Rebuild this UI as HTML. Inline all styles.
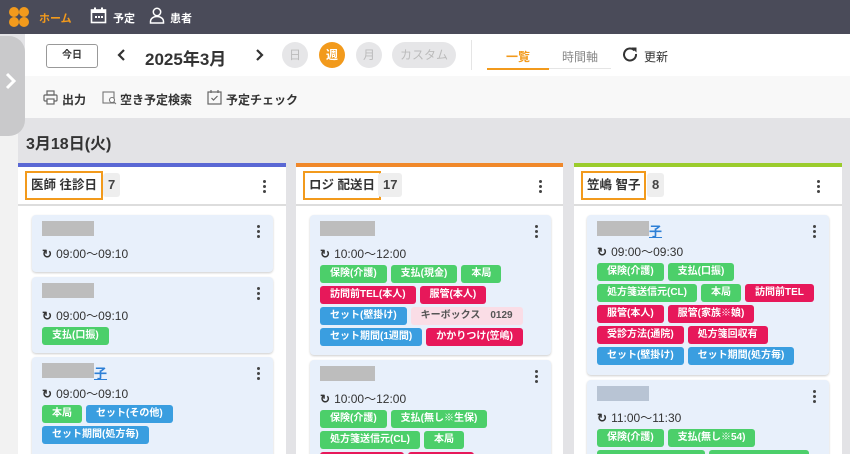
<!DOCTYPE html><html><head><meta charset="utf-8"><style>
*{box-sizing:border-box;margin:0;padding:0}
html,body{width:850px;height:454px;overflow:hidden}
body{background:#e3e3e6;font-family:"Liberation Sans","Noto Sans CJK JP",sans-serif;position:relative;color:#333}
.a{position:absolute}
.top{left:0;top:0;width:850px;height:34px;background:#4a4b59;color:#fff;font-size:11px;font-weight:bold}
.tb{left:25px;top:34px;width:825px;height:42px;background:#fff}
.tb2{left:25px;top:76px;width:825px;height:42px;background:#f8f8f8;font-size:12px;font-weight:bold;color:#333}
.circ{width:26px;height:26px;border-radius:13px;background:#e6e6e8;color:#bbb;font-size:12px;text-align:center;line-height:26px}
.col{background:#fff;border-top:4px solid}
.hdr{height:39px;border-bottom:2px solid #ddd;position:relative}
.hl{position:absolute;left:7px;top:4px;height:29px;border:2px solid #f29a1c;font-size:12.5px;font-weight:bold;line-height:25px;padding:0 4px;color:#333;background:#fff}
.cnt{position:absolute;top:6px;height:24px;background:#eee;border-radius:3px;font-size:13px;font-weight:bold;line-height:24px;padding:0 5px;color:#444}
.kb{position:absolute;width:3px}
.kb i{display:block;width:3px;height:3px;border-radius:2px;background:#444;margin-bottom:2px}
.card{position:absolute;background:#e8f0fb;border-radius:4px;box-shadow:0 1px 2px rgba(0,0,0,.2);padding:6px 10px;overflow:hidden}
.blur{height:15px;background:#bdbdbd;display:inline-block;vertical-align:top}
.nm{height:20px;font-size:13px;color:#2d7fd6;font-weight:bold;text-decoration:underline}
.tm{font-size:12px;margin-top:6px;height:19px;color:#333}
.tm b{font-weight:bold;font-size:12px;margin-right:4px}
.tags{display:flex;flex-wrap:wrap;gap:3px 4px;margin-top:1px}
.t{height:18px;border-radius:3px;font-size:10px;font-weight:bold;color:#fff;line-height:18px;padding:0 10px;white-space:nowrap}
.g{background:#4ccf6a}.r{background:#e7185a}.bl{background:#3a9ee0}.p{background:#fadde6;color:#555}
</style></head><body>
<div class="a top">
 <svg class="a" style="left:8px;top:6px" width="22" height="22"><g fill="#f29a1c"><circle cx="6" cy="6" r="5"/><circle cx="16" cy="6" r="5"/><circle cx="6" cy="16" r="5"/><circle cx="16" cy="16" r="5"/></g></svg>
 <span class="a" style="left:39px;top:10px;color:#f29a1c">ホーム</span>
 <svg class="a" style="left:90px;top:7px" width="17" height="17"><rect x="1.5" y="3" width="14" height="12.5" fill="none" stroke="#fff" stroke-width="1.6"/><rect x="1.5" y="3" width="14" height="3" fill="#fff"/><rect x="4" y="0.5" width="2" height="3" fill="#fff"/><rect x="11" y="0.5" width="2" height="3" fill="#fff"/><g fill="#fff"><rect x="5" y="9" width="2" height="2"/><rect x="8" y="9" width="2" height="2"/><rect x="11" y="9" width="2" height="2"/></g></svg>
 <span class="a" style="left:113px;top:10px">予定</span>
 <svg class="a" style="left:149px;top:7px" width="16" height="17"><circle cx="8" cy="5" r="3.7" fill="none" stroke="#fff" stroke-width="1.5"/><path d="M1.5 16v-1.5c0-3 3-5 6.5-5s6.5 2 6.5 5V16z" fill="none" stroke="#fff" stroke-width="1.5"/></svg>
 <span class="a" style="left:170px;top:10px">患者</span>
</div>
<div class="a" style="left:0;top:118px;width:18px;height:336px;background:#f2f2f2"></div>
<div class="a tb">
 <div class="a" style="left:21px;top:10px;width:52px;height:24px;border:1px solid #999;border-radius:3px;font-size:10px;text-align:center;line-height:22px;font-weight:bold">今日</div>
 <svg class="a" style="left:92px;top:15px" width="10" height="12"><path d="M7 1L2 6l5 5" fill="none" stroke="#333" stroke-width="2.2"/></svg>
 <div class="a" style="left:120px;top:11px;font-size:17px;font-weight:bold;color:#333">2025年3月</div>
 <svg class="a" style="left:229px;top:15px" width="10" height="12"><path d="M3 1l5 5-5 5" fill="none" stroke="#333" stroke-width="2.2"/></svg>
 <div class="a circ" style="left:257px;top:8px">日</div>
 <div class="a circ" style="left:294px;top:8px;background:#f29a1c;color:#fff;font-weight:bold">週</div>
 <div class="a circ" style="left:331px;top:8px">月</div>
 <div class="a circ" style="left:367px;top:8px;width:64px">カスタム</div>
 <div class="a" style="left:446px;top:6px;width:1px;height:30px;background:#e5e5e5"></div>
 <div class="a" style="left:462px;top:14px;width:62px;text-align:center;font-size:12px;color:#f29a1c;font-weight:bold">一覧</div>
 <div class="a" style="left:524px;top:14px;width:62px;text-align:center;font-size:12px;color:#888">時間軸</div>
 <div class="a" style="left:462px;top:34px;width:62px;height:2px;background:#f29a1c"></div>
 <div class="a" style="left:524px;top:34px;width:62px;height:1px;background:#e5e5e5"></div>
 <svg class="a" style="left:597px;top:12px" width="16" height="16"><path d="M12.5 4.5A6 6 0 1 0 14 8" fill="none" stroke="#333" stroke-width="2"/><path d="M9.5 1.5h5v5z" fill="#333"/></svg>
 <div class="a" style="left:619px;top:14px;font-size:12px">更新</div>
</div>
<div class="a tb2">
 <svg class="a" style="left:18px;top:14px" width="15" height="15"><rect x="4" y="1" width="7" height="4" fill="none" stroke="#666" stroke-width="1.2"/><rect x="1" y="5" width="13" height="6" rx="1" fill="none" stroke="#666" stroke-width="1.2"/><rect x="4" y="9" width="7" height="5" fill="#fff" stroke="#666" stroke-width="1.2"/></svg>
 <span class="a" style="left:37px;top:15px">出力</span>
 <svg class="a" style="left:77px;top:14px" width="15" height="15"><rect x="1" y="2" width="11" height="11" fill="none" stroke="#777" stroke-width="1.1"/><circle cx="10" cy="10" r="2.5" fill="#fff" stroke="#777" stroke-width="1.1"/><path d="M12 12l2 2" stroke="#777"/></svg>
 <span class="a" style="left:95px;top:15px">空き予定検索</span>
 <svg class="a" style="left:182px;top:13px" width="15" height="16"><rect x="1" y="3" width="13" height="12" fill="none" stroke="#666" stroke-width="1.2"/><path d="M4 1v3M11 1v3M4.5 9l2 2 4-4" fill="none" stroke="#666" stroke-width="1.2"/></svg>
 <span class="a" style="left:201px;top:15px">予定チェック</span>
</div>
<div class="a" style="left:0;top:36px;width:25px;height:100px;background:#c9c9cb;border-radius:0 16px 16px 0"></div>
<svg class="a" style="left:5px;top:72px" width="12" height="18"><path d="M2 2l7 7-7 7" fill="none" stroke="#fff" stroke-width="3"/></svg>
<div class="a" style="left:26px;top:130px;font-size:16px;font-weight:bold;color:#333">3月18日(火)</div>

<div class="a col" style="left:18px;top:163px;width:268px;height:300px;border-color:#5a68d4">
 <div class="hdr"><div class="hl">医師 往診日</div><div class="cnt" style="left:85px">7</div><div class="kb" style="left:245px;top:13px"><i></i><i></i><i></i></div></div>
</div>
<div class="card" style="left:32px;top:215px;width:241px;height:57px"><span class="blur" style="width:52px"></span><div class="tm"><b>↻</b>09:00〜09:10</div><div class="kb" style="left:225px;top:10px;position:absolute"><i></i><i></i><i></i></div></div>
<div class="card" style="left:32px;top:277px;width:241px;height:76px"><span class="blur" style="width:52px"></span><div class="tm"><b>↻</b>09:00〜09:10</div><div class="tags"><span class="t g">支払(口振)</span></div><div class="kb" style="left:225px;top:10px;position:absolute"><i></i><i></i><i></i></div></div>
<div class="card" style="left:32px;top:357px;width:241px;height:110px"><span class="blur" style="width:52px"></span><span class="nm">子</span><div class="tm" style="margin-top:2px"><b>↻</b>09:00〜09:10</div><div class="tags"><span class="t g">本局</span><span class="t bl">セット(その他)</span><span class="t bl">セット期間(処方毎)</span></div><div class="kb" style="left:225px;top:10px;position:absolute"><i></i><i></i><i></i></div></div>

<div class="a col" style="left:296px;top:163px;width:267px;height:300px;border-color:#f0882a">
 <div class="hdr"><div class="hl">ロジ 配送日</div><div class="cnt" style="left:82px">17</div><div class="kb" style="left:243px;top:13px"><i></i><i></i><i></i></div></div>
</div>
<div class="card" style="left:310px;top:215px;width:241px;height:140px"><span class="blur" style="width:55px"></span><div class="tm"><b>↻</b>10:00〜12:00</div><div class="tags"><span class="t g">保険(介護)</span><span class="t g">支払(現金)</span><span class="t g">本局</span><span class="t r">訪問前TEL(本人)</span><span class="t r">服管(本人)</span><span class="t bl">セット(壁掛け)</span><span class="t p">キーボックス　0129</span><span class="t bl">セット期間(1週間)</span><span class="t r">かかりつけ(笠嶋)</span></div><div class="kb" style="left:225px;top:10px;position:absolute"><i></i><i></i><i></i></div></div>
<div class="card" style="left:310px;top:360px;width:241px;height:110px"><span class="blur" style="width:55px"></span><div class="tm"><b>↻</b>10:00〜12:00</div><div class="tags"><span class="t g">保険(介護)</span><span class="t g">支払(無し※生保)</span><span class="t g">処方箋送信元(CL)</span><span class="t g">本局</span><span class="t r" style="width:84px"></span><span class="t r" style="width:66px"></span></div><div class="kb" style="left:225px;top:10px;position:absolute"><i></i><i></i><i></i></div></div>

<div class="a col" style="left:574px;top:163px;width:268px;height:300px;border-color:#9bcc2c">
 <div class="hdr"><div class="hl">笠嶋 智子</div><div class="cnt" style="left:73px">8</div><div class="kb" style="left:243px;top:13px"><i></i><i></i><i></i></div></div>
</div>
<div class="card" style="left:587px;top:215px;width:242px;height:160px"><span class="blur" style="width:52px"></span><span class="nm">子</span><div class="tm" style="margin-top:2px"><b>↻</b>09:00〜09:30</div><div class="tags"><span class="t g">保険(介護)</span><span class="t g">支払(口振)</span><span class="t g">処方箋送信元(CL)</span><span class="t g">本局</span><span class="t r">訪問前TEL</span><span class="t r">服管(本人)</span><span class="t r">服管(家族※娘)</span><span class="t r">受診方法(通院)</span><span class="t r">処方箋回収有</span><span class="t bl">セット(壁掛け)</span><span class="t bl">セット期間(処方毎)</span></div><div class="kb" style="left:226px;top:10px;position:absolute"><i></i><i></i><i></i></div></div>
<div class="card" style="left:587px;top:380px;width:242px;height:90px"><span class="blur" style="width:52px;background:#b8c4d4"></span><div class="tm" style="margin-top:5px"><b>↻</b>11:00〜11:30</div><div class="tags"><span class="t g">保険(介護)</span><span class="t g">支払(無し※54)</span><span class="t g" style="width:108px"></span><span class="t g" style="width:100px"></span></div><div class="kb" style="left:226px;top:10px;position:absolute"><i></i><i></i><i></i></div></div>
</body></html>
